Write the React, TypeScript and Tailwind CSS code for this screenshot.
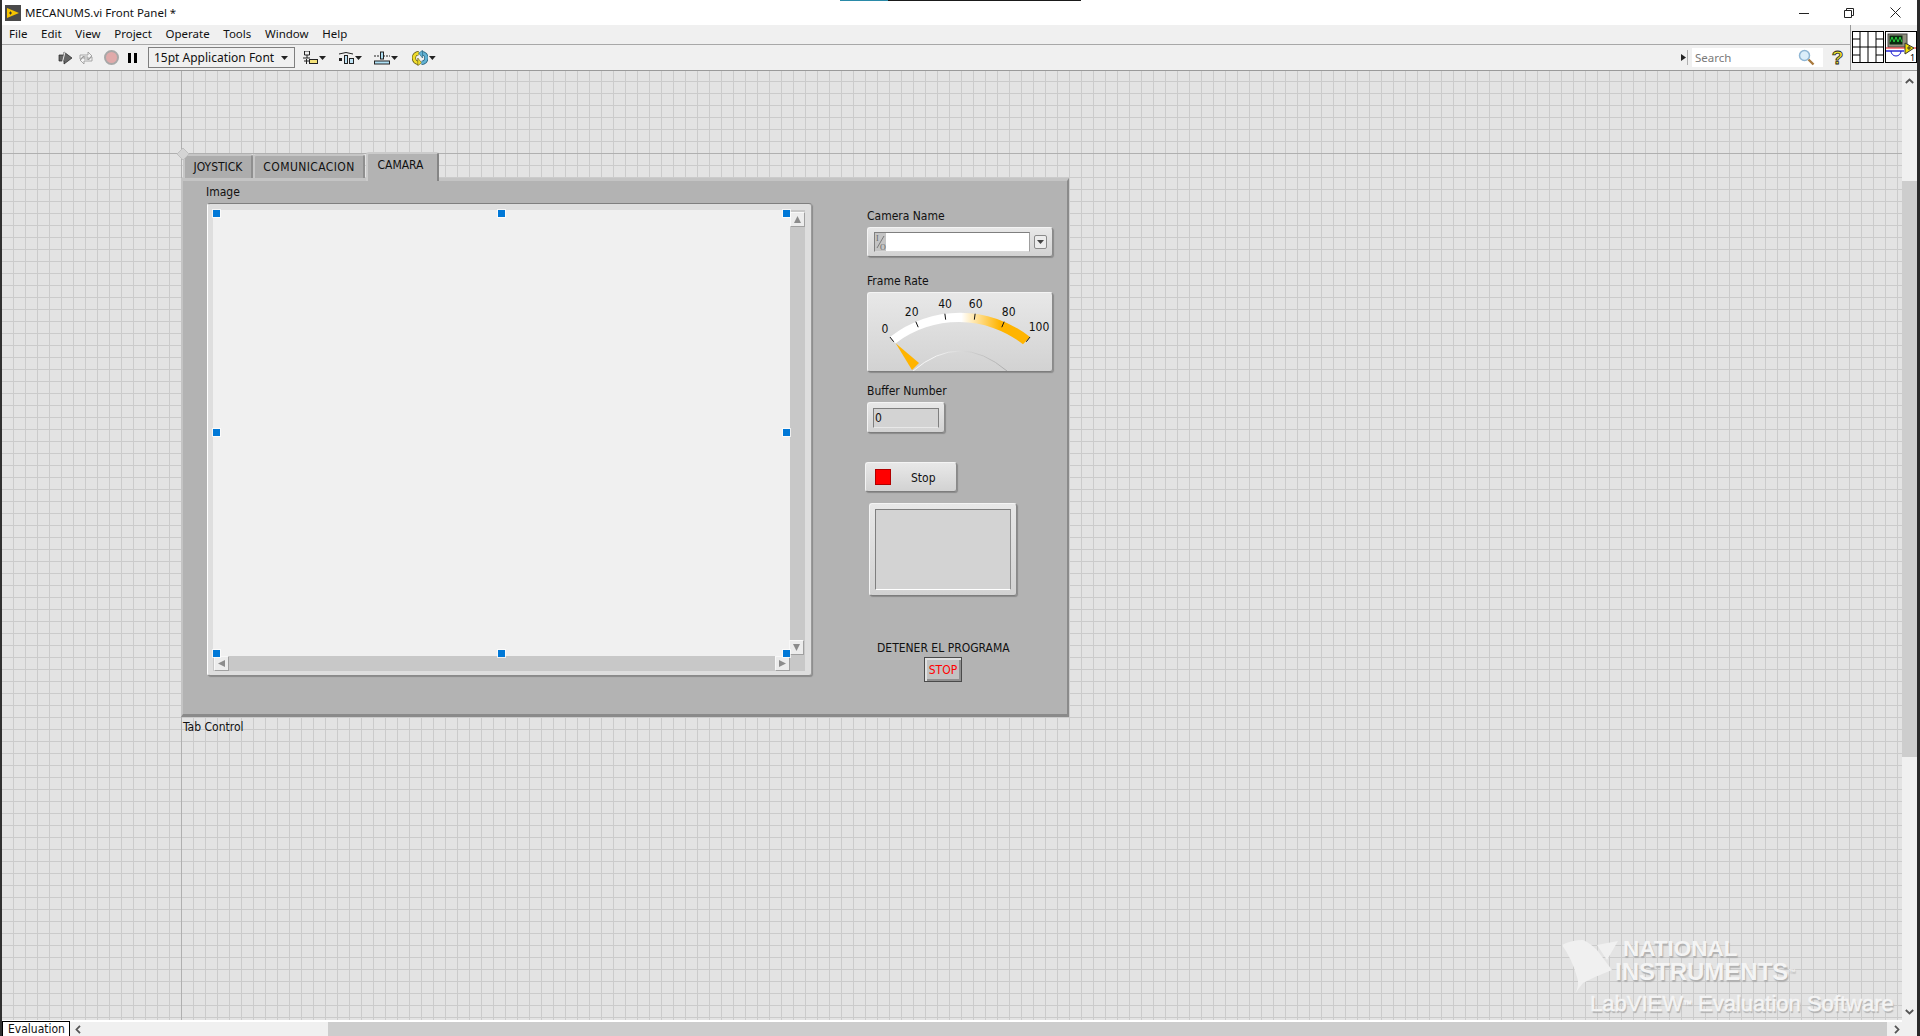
import React from "react";

const uiFont = "font-['Noto_Sans','Open_Sans',sans-serif]";
const panelFont = "font-['DejaVu_Sans_Condensed','DejaVu_Sans',sans-serif]";
const menus = ["File", "Edit", "View", "Project", "Operate", "Tools", "Window", "Help"];

const Handle = ({ className }: { className: string }) => (
  <div className={`absolute w-[7px] h-[7px] bg-[#0078d7] outline outline-1 outline-white/70 ${className}`} />
);

// raised LabVIEW silver frame, holds a sunken readout
const SilverBox = ({ className, children }: { className: string; children?: React.ReactNode }) => (
  <div
    className={`flex shrink-0 items-center rounded-[3px] border border-[#f4f4f4] border-b-[#7d7d7d] border-r-[#8a8a8a] bg-gradient-to-b from-[#e8e8e8] to-[#d2d2d2] shadow-[1px_1px_1px_#8a8a8a] ${className}`}
  >
    {children}
  </div>
);

const ScrollBtn = ({ className = "", points }: { className?: string; points: string }) => (
  <div className={`w-[15px] h-[15px] shrink-0 bg-[#ececec] border border-[#f8f8f8] border-b-[#a0a0a0] border-r-[#a0a0a0] flex items-center justify-center ${className}`}>
    <svg width="9" height="9" viewBox="0 0 9 9">
      <polygon points={points} fill="#8c8c8c" />
    </svg>
  </div>
);

const DropIcon = () => (
  <svg width="7" height="4" viewBox="0 0 7 4" className="ml-[1px]">
    <polygon points="0,0 7,0 3.5,4" fill="#222" />
  </svg>
);

const Gauge = () => {
  const cx = 92;
  const cy = 132.7;
  const ticks = [-38.3, -23, -7.7, 7.7, 23, 38.3];
  const labels: [string, number, number][] = [
    ["0", 17, 36],
    ["20", 43.7, 19],
    ["40", 77, 11],
    ["60", 107.7, 11],
    ["80", 140.7, 19],
    ["100", 171, 34],
  ];
  return (
    <svg width="184" height="78" viewBox="0 0 184 78">
      <defs>
        <linearGradient id="band" x1="27" x2="155" y1="0" y2="0" gradientUnits="userSpaceOnUse">
          <stop offset="0.52" stopColor="#ffffff" />
          <stop offset="0.82" stopColor="#ffb400" />
        </linearGradient>
        <linearGradient id="hub" x1="46" x2="139" y1="0" y2="0" gradientUnits="userSpaceOnUse">
          <stop offset="0.2" stopColor="#f6f6f6" />
          <stop offset="1" stopColor="#ababab" />
        </linearGradient>
      </defs>
      <path d="M27.7 50.3 L22 44 A113 113 0 0 1 162 44 L155 51.3 A104 104 0 0 0 27.7 50.3 Z" fill="url(#band)" />
      {ticks.map((a) => {
        const r = (a * Math.PI) / 180;
        return (
          <line
            key={a}
            x1={cx + 113 * Math.sin(r)}
            y1={cy - 113 * Math.cos(r)}
            x2={cx + 107 * Math.sin(r)}
            y2={cy - 107 * Math.cos(r)}
            stroke="#111"
            strokeWidth="1"
          />
        );
      })}
      {labels.map(([t, x, y]) => (
        <text key={t} x={x} y={y + 4} textAnchor="middle" fontSize="12" fill="#111" fontFamily="DejaVu Sans Condensed, DejaVu Sans, sans-serif">
          {t}
        </text>
      ))}
      <path d="M45 78 Q92 38 139 78" fill="none" stroke="url(#hub)" strokeWidth="1" />
      <polygon points="27.7,50.3 44,77 51,70" fill="#ffb400" />
    </svg>
  );
};

const ImageDisplay = () => (
  <div className="relative w-[605px] h-[473px] flex flex-col pt-[6px] pl-[5px] bg-[#dedede] rounded-[3px] border border-white border-t-[#7f7f7f] border-r-[#9a9a9a] border-b-[#8a8a8a] shadow-[1px_1px_1px_#8a8a8a]">
    <div className="flex h-[446px]">
      <div className="w-[577px] bg-[#f0f0f0]" />
      <div className="w-[15px] flex flex-col justify-between pt-[2px] pb-[1px] bg-[#c8c8c8]">
        <ScrollBtn points="4.5,1 8,8 1,8" />
        <ScrollBtn className="-ml-[1px]" points="1,1 8,1 4.5,8" />
      </div>
    </div>
    <div className="flex justify-between w-[592px] h-[15px] pl-[1px] pr-[15px] bg-[#c8c8c8]">
      <ScrollBtn points="1,4.5 8,1 8,8" />
      <ScrollBtn points="1,1 8,4.5 1,8" />
    </div>
    <Handle className="left-[5px] top-[6px]" />
    <Handle className="left-[290px] top-[6px]" />
    <Handle className="left-[575px] top-[6px]" />
    <Handle className="left-[5px] top-[225px]" />
    <Handle className="left-[575px] top-[225px]" />
    <Handle className="left-[5px] top-[446px]" />
    <Handle className="left-[290px] top-[446px]" />
    <Handle className="left-[575px] top-[446px]" />
  </div>
);

const Controls = () => (
  <div className="ml-[55px] pt-[24px] flex flex-col items-start">
    <span>Camera Name</span>
    <SilverBox className="mt-[2px] w-[186px] h-[30px] pl-[6px] gap-[4px]">
      <div className="w-[156px] h-[20px] flex bg-white border border-[#7f7f7f] border-r-[#9f9f9f] border-b-[#d8d8d8]">
        <svg width="11" height="18" viewBox="0 0 11 18" className="bg-[#c4c4c4]">
          <text x="1" y="8" fontSize="8" fill="#666" fontFamily="Liberation Serif, serif">I</text>
          <path d="M9 3L2 15" stroke="#666" strokeWidth="0.8" />
          <text x="5" y="17" fontSize="8" fill="#666" fontFamily="Liberation Serif, serif">O</text>
        </svg>
      </div>
      <div className="w-[13px] h-[14px] bg-[#ececec] border border-[#8a8a8a] rounded-[2px] flex items-center justify-center">
        <svg width="7" height="4" viewBox="0 0 7 4">
          <polygon points="0,0 7,0 3.5,4" fill="#444" />
        </svg>
      </div>
    </SilverBox>

    <span className="mt-[15px]">Frame Rate</span>
    <SilverBox className="mt-[2px] w-[186px] h-[80px]">
      <Gauge />
    </SilverBox>

    <span className="mt-[10px]">Buffer Number</span>
    <SilverBox className="mt-[2px] w-[78px] h-[31px] pl-[5px]">
      <div className="w-[66px] h-[20px] pl-[1px] bg-[#d3d3d3] border border-[#7f7f7f] border-b-[#e8e8e8] leading-[18px]">0</div>
    </SilverBox>

    <SilverBox className="mt-[29px] -ml-[2px] w-[92px] h-[30px]">
      <div className="ml-[9px] w-[16px] h-[16px] bg-[#ff0000] border border-[#b00000]" />
      <span className="ml-[20px] mt-[1px]">Stop</span>
    </SilverBox>

    <SilverBox className="mt-[11px] ml-[2px] w-[148px] h-[93px] pl-[5px]">
      <div className="w-[136px] h-[81px] bg-[#d3d3d3] border border-[#7f7f7f] border-b-white border-r-[#8f8f8f]" />
    </SilverBox>

    <span className="mt-[43px] ml-[10px] whitespace-nowrap">DETENER EL PROGRAMA</span>
    <div className="ml-[57px] w-[38px] h-[25px] flex items-center justify-center bg-[#c2c2c2] border border-[#4a4a4a] shadow-[inset_2px_2px_0_#e0e0e0,inset_-2px_-2px_0_#8f8f8f] text-[#ff0000]">STOP</div>
  </div>
);

const TabControl = () => (
  <div className={`absolute left-[179px] top-[81px] w-[888px] ${panelFont} text-[12px] text-[#111]`}>
    <svg width="12" height="12" viewBox="0 0 12 12" className="absolute left-[-4px] top-[-4px]">
      <polygon points="6,0 12,6 6,12 0,6" fill="#d4d4d4" stroke="#c0c0c0" />
    </svg>
    {/* tab row */}
    <div className="flex h-[26px] items-end pl-[2px]">
      <div className="w-[70px] h-[24px] flex items-center justify-center bg-[#adadad] border-t-2 border-l-2 border-[#c6c6c6] border-r-2 border-r-[#8f8f8f] rounded-t-[3px]">JOYSTICK</div>
      <div className="w-[112px] h-[24px] flex items-center justify-center tracking-[0.4px] bg-[#adadad] border-t-2 border-l-2 border-[#c6c6c6] border-r-2 border-r-[#8f8f8f] rounded-t-[3px]">COMUNICACION</div>
      <div className="w-[73px] h-[29px] ml-[1px] pb-[5px] pr-[4px] flex items-center justify-center bg-[#b3b3b3] border-t-2 border-l-2 border-[#cbcbcb] border-r-2 border-r-[#858585] rounded-t-[3px] relative top-[3px]">CAMARA</div>
    </div>
    {/* panel */}
    <div className="flex items-start h-[539px] pl-[24px] pt-[2px] bg-[#b3b3b3] border-2 border-t-[3px] border-[#c4c4c4] border-r-[#8a8a8a] border-b-[3px] border-b-[#8a8a8a]">
      <div className="flex flex-col items-start">
        <span className="-ml-[1px]">Image</span>
        <div className="mt-[2px]">
          <ImageDisplay />
        </div>
      </div>
      <Controls />
    </div>
    <div className="mt-[1px] pl-[2px]">Tab Control</div>
  </div>
);

const Watermark = () => (
  <div className="absolute left-[1560px] top-[868px] w-[340px] h-[80px] flex flex-col pointer-events-none font-['Liberation_Sans',sans-serif] font-bold text-[#f4f4f4] [text-shadow:1px_2px_1px_#b0b0b0]">
    <svg width="62" height="64" viewBox="0 0 62 64" className="absolute left-0 top-0">
      <path d="M0 6 Q10 1 21 1 Q28 4 35 11 L50 31 L33 38 L21 44 Q16 50 13 55 Q18 46 15 38 Q10 20 0 6 Z" fill="#f0f0f0" />
      <path d="M35 6 L56 2 L45 21 Z" fill="#f0f0f0" />
    </svg>
    <span className="ml-[61px] -mt-[1px] text-[22.5px] leading-[22px]">NATIONAL</span>
    <span className="ml-[53px] text-[24px] leading-[24px] whitespace-nowrap">
      INSTRUMENTS<span className="text-[7px] align-top font-normal">™</span>
    </span>
    <span className="ml-[28px] mt-[7px] text-[22px] leading-[26px] whitespace-nowrap font-normal [-webkit-text-stroke:0.5px_#f4f4f4]">
      LabVIEW<span className="text-[9px] align-top">™</span> Evaluation Software
    </span>
  </div>
);

const App: React.FC = () => {
  return (
    <div className={`relative w-[1920px] h-[1036px] overflow-hidden flex flex-col bg-white border-l-2 border-r-[3px] border-l-[#303030] border-r-[#2a2a2a] ${uiFont} text-[11.5px] text-[#111]`}>
      {/* title bar */}
      <div className="relative h-[25px] shrink-0 flex items-center bg-white">
        <div className="absolute left-[838px] top-0 flex h-[1px]">
          <div className="w-[48px] bg-[#2a8aa8]" />
          <div className="w-[193px] bg-[#1a1a1a]" />
        </div>
        <svg width="16" height="16" viewBox="0 0 16 16" className="ml-[3px]">
          <rect width="16" height="16" fill="#4a4a4a" />
          <polygon points="2,3 14,8 2,13" fill="#f6c400" />
          <path d="M4 8h3M5.5 6.5v3" stroke="#333" strokeWidth="1" />
        </svg>
        <span className="ml-[4px] pt-[1px] text-[11.5px]">MECANUMS.vi Front Panel *</span>
        <div className="ml-auto flex items-center">
          <svg width="10" height="10" viewBox="0 0 10 10" className="mr-[35px]">
            <path d="M0 5.5h10" stroke="#222" />
          </svg>
          <svg width="10" height="10" viewBox="0 0 10 10" className="mr-[36px]">
            <path d="M.5 2.5h7v7h-7zM2.5 2.5v-2h7v7h-2" fill="none" stroke="#222" />
          </svg>
          <svg width="11" height="11" viewBox="0 0 11 11" className="mr-[16px]">
            <path d="M.5 .5l10 10M10.5 .5l-10 10" stroke="#222" />
          </svg>
        </div>
      </div>

      {/* menu + toolbar, with connector pane at the right */}
      <div className="flex h-[46px] shrink-0 bg-[#f0f0f0] border-b border-[#9a9a9a]">
        <div className="flex-1 flex flex-col">
          <div className="h-[20px] flex items-center pl-[7px] pb-[2px] gap-[13.7px] border-b border-[#a8a8a8]">
            {menus.map((m) => (
              <span key={m}>{m}</span>
            ))}
          </div>
          <div className="flex-1 flex items-center">
            <svg width="15" height="14" viewBox="0 0 15 14" className="ml-[56px]">
              <path d="M1 4h5V1l8 6-8 6v-3H1z" fill="#666" stroke="#222" strokeWidth="0.7" />
              <path d="M7 1L4 13" stroke="#eee" />
            </svg>
            <svg width="16" height="14" viewBox="0 0 16 14" className="ml-[5px]">
              <path d="M2 8V4h8V1l4 4-4 4V6H4v2zM14 6v4H6v3L2 9l4-4v3h6V6z" fill="#f4f4f4" stroke="#949494" strokeWidth="0.8" />
            </svg>
            <div className="ml-[10px] w-[15px] h-[15px] rounded-full border-2 border-[#a8a8a8] bg-[#e0aaaa]" />
            <div className="ml-[9px] flex gap-[3px]">
              <div className="w-[3px] h-[10px] bg-black" />
              <div className="w-[3px] h-[10px] bg-black" />
            </div>
            <div className="ml-[11px] w-[147px] h-[21px] flex items-center justify-between pl-[5px] pr-[6px] border border-[#7f7f7f] text-[12px]">
              <span>15pt Application Font</span>
              <DropIcon />
            </div>
            <div className="ml-[8px] flex items-center w-[23px]">
              <svg width="15" height="14" viewBox="0 0 15 14">
                <path d="M1.5 0h5v4h-5zM4 4v3M0 7h7" fill="none" stroke="#222" />
                <rect x="6.5" y="8.5" width="8" height="4" fill="#f4e27a" stroke="#222" />
                <path d="M1 10h5M3.5 8v5" stroke="#222" />
              </svg>
              <DropIcon />
            </div>
            <div className="ml-[12px] flex items-center w-[24px]">
              <svg width="16" height="14" viewBox="0 0 16 14">
                <path d="M1 3Q8 0 15 3" fill="none" stroke="#222" />
                <rect x="1" y="7" width="3" height="3" fill="#222" />
                <rect x="6.5" y="4.5" width="3" height="8" fill="#bfe3f5" stroke="#222" />
                <rect x="11.5" y="7.5" width="4" height="5" fill="#bfe3f5" stroke="#222" />
              </svg>
              <DropIcon />
            </div>
            <div className="ml-[12px] flex items-center w-[24px]">
              <svg width="16" height="14" viewBox="0 0 16 14">
                <rect x="0.5" y="10" width="15" height="3" fill="#aee0f5" stroke="#222" />
                <path d="M0 5h16" stroke="#222" strokeDasharray="2 1" />
                <rect x="6.5" y="1" width="3" height="7" fill="#aee0f5" stroke="#222" />
              </svg>
              <DropIcon />
            </div>
            <div className="ml-[14px] flex items-center w-[24px]">
              <svg width="17" height="16" viewBox="0 0 17 16">
                <path d="M7 3A5 5 0 0 0 7 13" fill="none" stroke="#5b5310" strokeWidth="4.4" />
                <path d="M7 3A5 5 0 0 0 7 13" fill="none" stroke="#f0dc2e" strokeWidth="3" />
                <polygon points="6,8 10,13 6,16" fill="#f0dc2e" stroke="#5b5310" strokeWidth="0.6" />
                <path d="M10 3A5 5 0 0 1 10 13" fill="none" stroke="#1f5a73" strokeWidth="4.4" />
                <path d="M10 3A5 5 0 0 1 10 13" fill="none" stroke="#62b2d4" strokeWidth="3" />
                <polygon points="11,0 7,3 11,8" fill="#62b2d4" stroke="#1f5a73" strokeWidth="0.6" />
              </svg>
              <DropIcon />
            </div>
            <div className="ml-auto flex items-center">
              <svg width="5" height="7" viewBox="0 0 5 7">
                <polygon points="0,0 5,3.5 0,7" fill="#222" />
              </svg>
              <div className="ml-[1px] w-[1px] h-[15px] bg-[#b0b0b0]" />
              <div className="ml-[4px] w-[131px] h-[19px] flex items-center pl-[3px] pr-[8px] bg-white text-[11.5px] text-[#7a7a7a]">
                <span>Search</span>
                <svg width="17" height="17" viewBox="0 0 17 17" className="ml-auto">
                  <circle cx="6.5" cy="6.5" r="5" fill="#dbeefa" stroke="#8fb6d4" strokeWidth="1.5" />
                  <path d="M10.5 10.5l5 5" stroke="#a9793d" strokeWidth="2.4" />
                </svg>
              </div>
              <span className="ml-[8px] mr-[6px] w-[13px] text-center text-[19px] leading-[20px] font-bold text-[#f2e22a] font-['Liberation_Sans',sans-serif] [-webkit-text-stroke:0.8px_#222]">?</span>
            </div>
          </div>
        </div>
        {/* connector pane + icon */}
        <div className="w-[67px] flex items-start gap-[1px] border-l border-[#9a9a9a] pt-[6px] pl-[1px]">
          <svg width="32" height="32" viewBox="0 0 32 32">
            <rect x="0.5" y="0.5" width="31" height="31" fill="#fff" stroke="#000" />
            <path d="M8 .5v31M16 .5v31M24 .5v31M.5 8h7.5M.5 16h31M.5 24h7.5M24 8h8M24 24h8" stroke="#000" fill="none" />
          </svg>
          <svg width="32" height="32" viewBox="0 0 32 32">
            <rect x="0.5" y="0.5" width="31" height="31" fill="#fff" stroke="#000" />
            <rect x="3" y="3" width="19" height="13" fill="#8f8f7c" stroke="#444" />
            <rect x="4.5" y="4.5" width="13" height="9" fill="#0a2a10" />
            <path d="M5 11l2-5 2 5 2-5 2 5 2-5 2 5" stroke="#25d03c" fill="none" />
            <path d="M1 17h19" stroke="#e11" />
            <path d="M1 20h18" stroke="#1a1ad0" strokeWidth="1.4" />
            <path d="M6 20a5 5 0 0 0 10 0" stroke="#1a1ad0" fill="none" />
            <polygon points="20,12 29,17 20,23" fill="#f4e200" stroke="#333" />
            <path d="M29 17h2" stroke="#e11" />
            <path d="M22 17h4M24 15v4" stroke="#333" />
            <text x="25" y="30" fontSize="9" fill="#000" fontFamily="Noto Sans, sans-serif">1</text>
          </svg>
        </div>
      </div>

      {/* canvas + vertical scrollbar */}
      <div className="flex-1 flex min-h-0">
        <div className="relative flex-1 overflow-hidden bg-[#e3e3e3] bg-[linear-gradient(to_right,#cbcbcb_1px,transparent_1px),linear-gradient(to_bottom,#cbcbcb_1px,transparent_1px)] bg-[size:12px_12px] bg-[position:11px_10px] border-b-2 border-white">
          <div className="absolute left-[179px] top-0 bottom-0 w-[1px] bg-[#b0b0b0]" />
          <div className="absolute left-0 right-0 top-[82px] h-[1px] bg-[#b0b0b0]" />
          <TabControl />
          <Watermark />
        </div>
        <div className="w-[15px] flex flex-col items-center bg-[#f0f0f0]">
          <svg width="9" height="6" viewBox="0 0 9 6" className="mt-[7px]">
            <path d="M.8 5L4.5 1.5 8.2 5" fill="none" stroke="#555" strokeWidth="1.8" />
          </svg>
          <div className="mt-[97px] w-[15px] h-[576px] bg-[#cdcdcd]" />
          <svg width="9" height="6" viewBox="0 0 9 6" className="mt-auto mb-[7px]">
            <path d="M.8 1L4.5 4.5 8.2 1" fill="none" stroke="#555" strokeWidth="1.8" />
          </svg>
        </div>
      </div>

      {/* horizontal scrollbar */}
      <div className="h-[14px] shrink-0 flex items-center bg-[#f0f0f0]">
        <div className={`relative z-10 w-[68px] h-[15px] -mt-[1px] bg-white border border-black border-b-0 pl-[5px] text-[12px] leading-[14px] ${panelFont}`}>Evaluation</div>
        <svg width="6" height="9" viewBox="0 0 6 9" className="ml-[5px]">
          <path d="M5 .8L1.5 4.5 5 8.2" fill="none" stroke="#555" strokeWidth="1.8" />
        </svg>
        <div className="ml-[247px] w-[1559px] h-[14px] bg-[#cdcdcd]" />
        <svg width="6" height="9" viewBox="0 0 6 9" className="ml-[7px]">
          <path d="M1 .8L4.5 4.5 1 8.2" fill="none" stroke="#555" strokeWidth="1.8" />
        </svg>
      </div>
    </div>
  );
};

export default App;
